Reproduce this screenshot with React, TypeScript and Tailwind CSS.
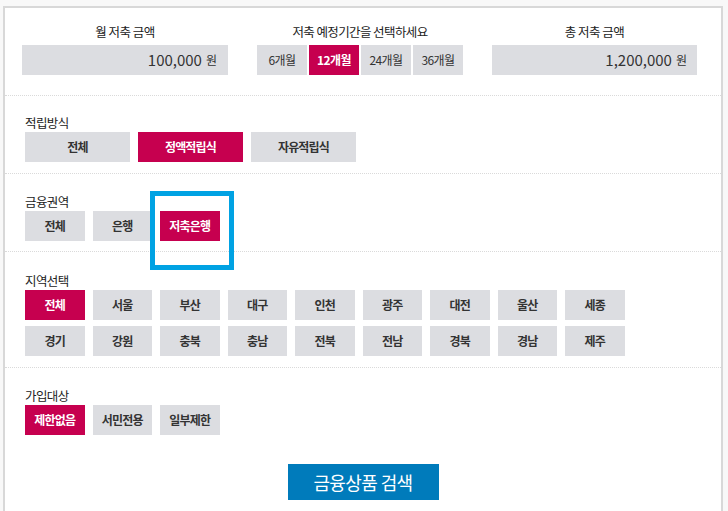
import React, { useState } from 'react';

const periods = ['6개월', '12개월', '24개월', '36개월'];
const methods = ['전체', '정액적립식', '자유적립식'];
const sectors = ['전체', '은행', '저축은행'];
const regions1 = ['전체', '서울', '부산', '대구', '인천', '광주', '대전', '울산', '세종'];
const regions2 = ['경기', '강원', '충북', '충남', '전북', '전남', '경북', '경남', '제주'];
const targets = ['제한없음', '서민전용', '일부제한'];

function OptionButton({ label, active, wide, onClick }: { label: string; active: boolean; wide?: boolean; onClick: () => void }) {
    return (
        <button
            type="button"
            onClick={onClick}
            className={`h-[30px] ${wide ? 'w-[105px]' : 'w-[59.5px]'} text-[12px] font-bold tracking-[-0.8px] ${
                active ? 'bg-[#c6004f] text-white' : 'bg-[#dcdde1] text-[#333]'
            }`}
        >
            {label}
        </button>
    );
}

function SectionLabel({ children }: { children: React.ReactNode }) {
    return <div className="text-[12.5px] leading-[18px] tracking-[-0.6px] text-[#222]">{children}</div>;
}

export default function App() {
    const [period, setPeriod] = useState(1);
    const [method, setMethod] = useState(1);
    const [sector, setSector] = useState(2);
    const [region, setRegion] = useState('전체');
    const [target, setTarget] = useState(0);

    const monthly = 100000;
    const months = [6, 12, 24, 36][period];
    const total = monthly * months;

    return (
        <div className="min-h-screen flex flex-col bg-[#f8f8f8] font-['Noto_Sans_CJK_KR','Noto_Sans',sans-serif] text-[#333]">
            <div className="ml-[3px] mt-[6px] w-[720px] flex-1 border-2 border-b-0 border-[#d8d8d8] bg-white">
                {/* 금액 / 기간 */}
                <div className="flex gap-[29px] pl-[17px] pt-[15px] pb-[20px] border-b border-dotted border-[#dadada]">
                    <div className="w-[206px]">
                        <div className="text-center text-[12.5px] leading-[18px] tracking-[-0.5px] text-[#222]">월 저축 금액</div>
                        <div className="mt-[4px] h-[30px] bg-[#dcdde1] flex items-center justify-end pr-[11px]">
                            <span className="text-[15px] text-[#333]">{monthly.toLocaleString()}</span>
                            <span className="ml-[4px] text-[12px] text-[#333]">원</span>
                        </div>
                    </div>
                    <div className="w-[206px]">
                        <div className="text-center text-[12.5px] leading-[18px] tracking-[-0.6px] text-[#222] whitespace-nowrap">
                            저축 예정기간을 선택하세요
                        </div>
                        <div className="mt-[4px] flex gap-[2px]">
                            {periods.map((p, i) => (
                                <button
                                    key={p}
                                    type="button"
                                    onClick={() => setPeriod(i)}
                                    className={`h-[30px] w-[50px] text-[12px] tracking-[-0.6px] ${
                                        i === period ? 'bg-[#c6004f] text-white font-bold' : 'bg-[#dcdde1] text-[#333]'
                                    }`}
                                >
                                    {p}
                                </button>
                            ))}
                        </div>
                    </div>
                    <div className="w-[205px]">
                        <div className="text-center text-[12.5px] leading-[18px] tracking-[-0.5px] text-[#222]">총 저축 금액</div>
                        <div className="mt-[4px] h-[30px] bg-[#dcdde1] flex items-center justify-end pr-[10px]">
                            <span className="text-[15px] text-[#333]">{total.toLocaleString()}</span>
                            <span className="ml-[4px] text-[12px] text-[#333]">원</span>
                        </div>
                    </div>
                </div>

                {/* 적립방식 */}
                <div className="pl-[20px] pt-[18px] pb-[11px] border-b border-dotted border-[#dadada]">
                    <SectionLabel>적립방식</SectionLabel>
                    <div className="flex gap-[8px]">
                        {methods.map((m, i) => (
                            <OptionButton key={m} label={m} wide active={i === method} onClick={() => setMethod(i)} />
                        ))}
                    </div>
                </div>

                {/* 금융권역 */}
                <div className="relative pl-[20px] pt-[19px] pb-[10px] border-b border-dotted border-[#dadada]">
                    <SectionLabel>금융권역</SectionLabel>
                    <div className="flex gap-[8px]">
                        {sectors.map((s, i) => (
                            <OptionButton key={s} label={s} active={i === sector} onClick={() => setSector(i)} />
                        ))}
                    </div>
                    <div className="absolute left-[145px] top-[17px] w-[84px] h-[79px] border-[5px] border-[#00a2e3] pointer-events-none" />
                </div>

                {/* 지역선택 */}
                <div className="pl-[20px] pt-[20px] pb-[11px] border-b border-dotted border-[#dadada]">
                    <SectionLabel>지역선택</SectionLabel>
                    <div className="flex gap-[8px]">
                        {regions1.map((r) => (
                            <OptionButton key={r} label={r} active={region === r} onClick={() => setRegion(r)} />
                        ))}
                    </div>
                    <div className="mt-[6px] flex gap-[8px]">
                        {regions2.map((r) => (
                            <OptionButton key={r} label={r} active={region === r} onClick={() => setRegion(r)} />
                        ))}
                    </div>
                </div>

                {/* 가입대상 */}
                <div className="pl-[20px] pt-[19px]">
                    <SectionLabel>가입대상</SectionLabel>
                    <div className="flex gap-[8px]">
                        {targets.map((t, i) => (
                            <OptionButton key={t} label={t} active={i === target} onClick={() => setTarget(i)} />
                        ))}
                    </div>
                </div>

                <div className="mt-[29px] flex justify-center">
                    <button type="button" className="h-[36px] w-[151px] bg-[#007bbb] text-white text-[18px] tracking-[-0.6px]">
                        금융상품 검색
                    </button>
                </div>
            </div>
        </div>
    );
}
